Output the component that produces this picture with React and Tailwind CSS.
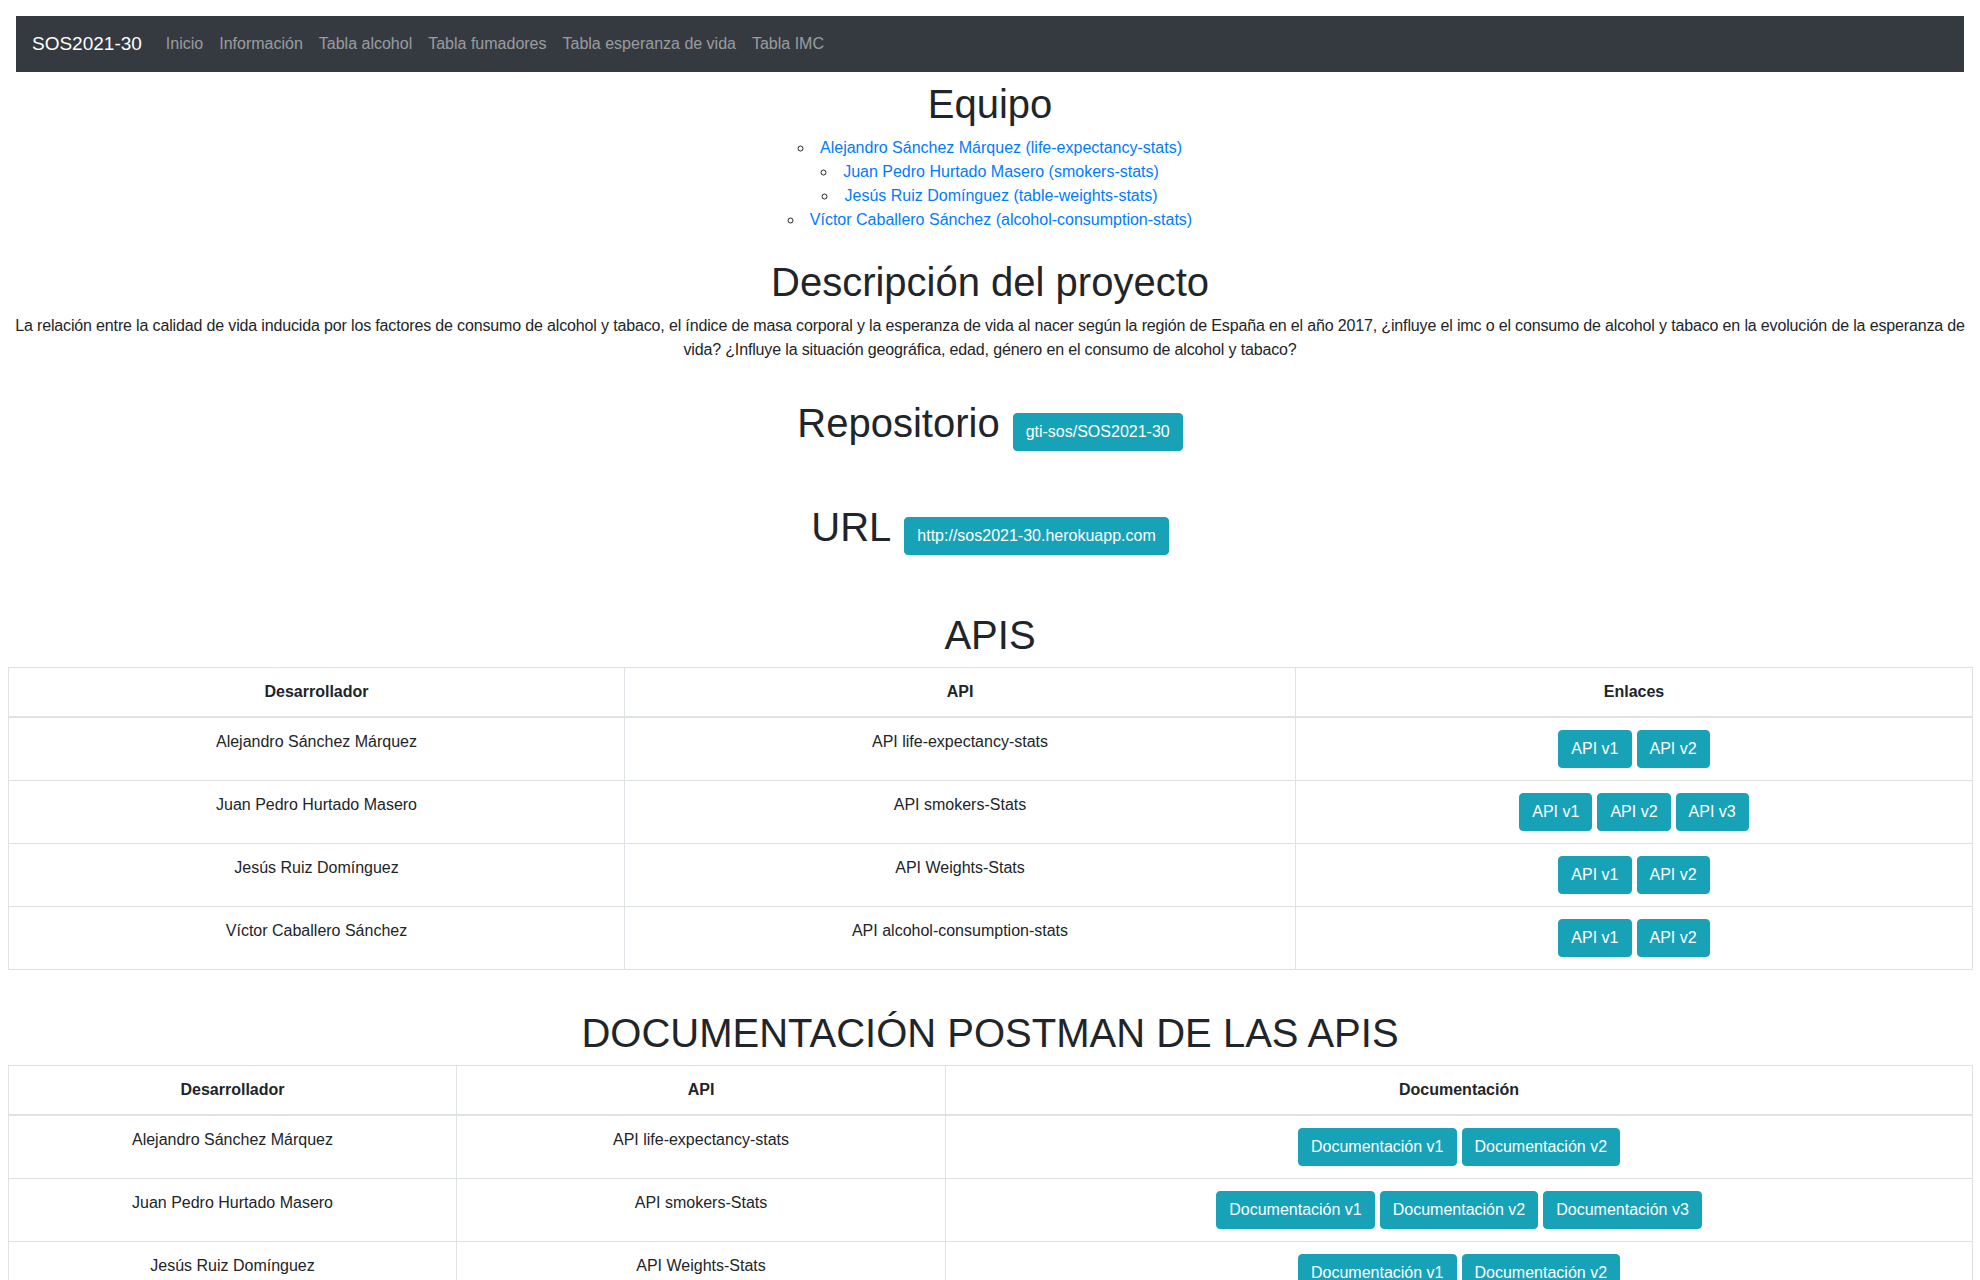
const navLinks = ['Inicio', 'Información', 'Tabla alcohol', 'Tabla fumadores', 'Tabla esperanza de vida', 'Tabla IMC']

const team = [
  'Alejandro Sánchez Márquez (life-expectancy-stats)',
  'Juan Pedro Hurtado Masero (smokers-stats)',
  'Jesús Ruiz Domínguez (table-weights-stats)',
  'Víctor Caballero Sánchez (alcohol-consumption-stats)',
]

const apis = [
  { dev: 'Alejandro Sánchez Márquez', api: 'API life-expectancy-stats', versions: ['v1', 'v2'] },
  { dev: 'Juan Pedro Hurtado Masero', api: 'API smokers-Stats', versions: ['v1', 'v2', 'v3'] },
  { dev: 'Jesús Ruiz Domínguez', api: 'API Weights-Stats', versions: ['v1', 'v2'] },
  { dev: 'Víctor Caballero Sánchez', api: 'API alcohol-consumption-stats', versions: ['v1', 'v2'] },
]

function Btn({ children }) {
  return (
    <a
      href="#"
      className="inline-block rounded-[4px] border border-[#17a2b8] bg-[#17a2b8] px-3 py-1.5 leading-6 text-white"
    >
      {children}
    </a>
  )
}

function Heading({ children, className = '' }) {
  return (
    <h1 className={`text-center text-[40px] font-medium leading-[48px] text-[#212529] ${className}`}>
      {children}
    </h1>
  )
}

function ApiTable({ widths, lastHeader, label }) {
  return (
    <table className="w-full table-fixed border-collapse border border-[#dee2e6]">
      <colgroup>
        <col style={{ width: widths[0] }} />
        <col style={{ width: widths[1] }} />
        <col style={{ width: widths[2] }} />
      </colgroup>
      <thead>
        <tr>
          <th className="border border-b-2 border-[#dee2e6] p-3 font-bold">Desarrollador</th>
          <th className="border border-b-2 border-[#dee2e6] p-3 font-bold">API</th>
          <th className="border border-b-2 border-[#dee2e6] p-3 font-bold">{lastHeader}</th>
        </tr>
      </thead>
      <tbody>
        {apis.map((row) => (
          <tr key={row.dev}>
            <td className="border border-[#dee2e6] p-3 text-center align-top">{row.dev}</td>
            <td className="border border-[#dee2e6] p-3 text-center align-top">{row.api}</td>
            <td className="border border-[#dee2e6] p-3 align-top">
              <div className="flex justify-center gap-[5px]">
                {row.versions.map((v) => (
                  <Btn key={v}>{label} {v}</Btn>
                ))}
              </div>
            </td>
          </tr>
        ))}
      </tbody>
    </table>
  )
}

export default function App() {
  return (
    <div className="min-h-screen bg-white px-2 pt-2 pb-10 font-['Liberation_Sans',Arial,sans-serif] text-base leading-6 text-[#212529]">
      <nav className="mx-2 mt-2 flex h-14 items-center bg-[#343a40] px-4">
        <a href="#" className="mr-4 text-[19px] leading-[30px] text-white">SOS2021-30</a>
        {navLinks.map((l) => (
          <a key={l} href="#" className="px-2 text-white/50">{l}</a>
        ))}
      </nav>

      <Heading className="mt-2 mb-2">Equipo</Heading>
      <ul className="list-inside list-[circle] text-center">
        {team.map((t) => (
          <li key={t}>
            <a href="#" className="text-[#007bff]">{t}</a>
          </li>
        ))}
      </ul>

      <Heading className="mt-[26px] mb-2">Descripción del proyecto</Heading>
      <p className="text-center tracking-[-0.15px]">
        La relación entre la calidad de vida inducida por los factores de consumo de alcohol y tabaco, el índice de masa corporal y la esperanza de vida al nacer según la región de España en el año 2017, ¿influye el imc o el consumo de alcohol y tabaco en la evolución de la esperanza de
        <br />
        vida? ¿Influye la situación geográfica, edad, género en el consumo de alcohol y tabaco?
      </p>

      <div className="mt-[37px] flex items-baseline justify-center gap-[13px]">
        <h1 className="text-[40px] font-medium leading-[48px]">Repositorio</h1>
        <Btn>gti-sos/SOS2021-30</Btn>
      </div>

      <div className="mt-[52px] flex items-baseline justify-center gap-[13px]">
        <h1 className="text-[40px] font-medium leading-[48px]">URL</h1>
        <Btn>http://sos2021-30.herokuapp.com</Btn>
      </div>

      <Heading className="mt-[56px] mb-2">APIS</Heading>
      <ApiTable widths={['616px', '671px', '677px']} lastHeader="Enlaces" label="API" />

      <Heading className="mt-[39px] mb-2">DOCUMENTACIÓN POSTMAN DE LAS APIS</Heading>
      <ApiTable widths={['448px', '489px', '1027px']} lastHeader="Documentación" label="Documentación" />
    </div>
  )
}
